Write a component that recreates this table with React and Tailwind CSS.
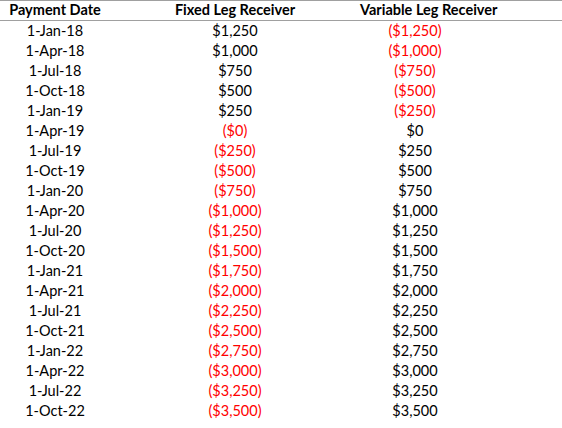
const rows = [
  ["1-Jan-18", "$1,250", "($1,250)"],
  ["1-Apr-18", "$1,000", "($1,000)"],
  ["1-Jul-18", "$750", "($750)"],
  ["1-Oct-18", "$500", "($500)"],
  ["1-Jan-19", "$250", "($250)"],
  ["1-Apr-19", "($0)", "$0"],
  ["1-Jul-19", "($250)", "$250"],
  ["1-Oct-19", "($500)", "$500"],
  ["1-Jan-20", "($750)", "$750"],
  ["1-Apr-20", "($1,000)", "$1,000"],
  ["1-Jul-20", "($1,250)", "$1,250"],
  ["1-Oct-20", "($1,500)", "$1,500"],
  ["1-Jan-21", "($1,750)", "$1,750"],
  ["1-Apr-21", "($2,000)", "$2,000"],
  ["1-Jul-21", "($2,250)", "$2,250"],
  ["1-Oct-21", "($2,500)", "$2,500"],
  ["1-Jan-22", "($2,750)", "$2,750"],
  ["1-Apr-22", "($3,000)", "$3,000"],
  ["1-Jul-22", "($3,250)", "$3,250"],
  ["1-Oct-22", "($3,500)", "$3,500"],
];

function Val({ v }) {
  const neg = v.startsWith("(");
  return <span className={neg ? "text-[#ff0000]" : "text-black"}>{v}</span>;
}

export default function App() {
  return (
    <div
      className="w-[562px] h-[428px] bg-white overflow-hidden text-[14.5px] leading-none whitespace-nowrap"
      style={{ fontFamily: "Lato, 'Liberation Sans', sans-serif" }}
    >
      <div className="flex h-[21px] border-t border-b border-[#a0a0a0] font-bold items-center">
        <div className="w-[110px] shrink-0 text-center">Payment Date</div>
        <div className="w-[250px] shrink-0 text-center">Fixed Leg Receiver</div>
        <div className="w-[110px] shrink-0 text-center">Variable Leg Receiver</div>
      </div>
      {rows.map((r) => (
        <div key={r[0]} className="flex h-[20px] items-center">
          <div className="w-[110px] shrink-0 text-center">{r[0]}</div>
          <div className="w-[250px] shrink-0 text-center"><Val v={r[1]} /></div>
          <div className="w-[110px] shrink-0 text-center"><Val v={r[2]} /></div>
        </div>
      ))}
    </div>
  );
}
